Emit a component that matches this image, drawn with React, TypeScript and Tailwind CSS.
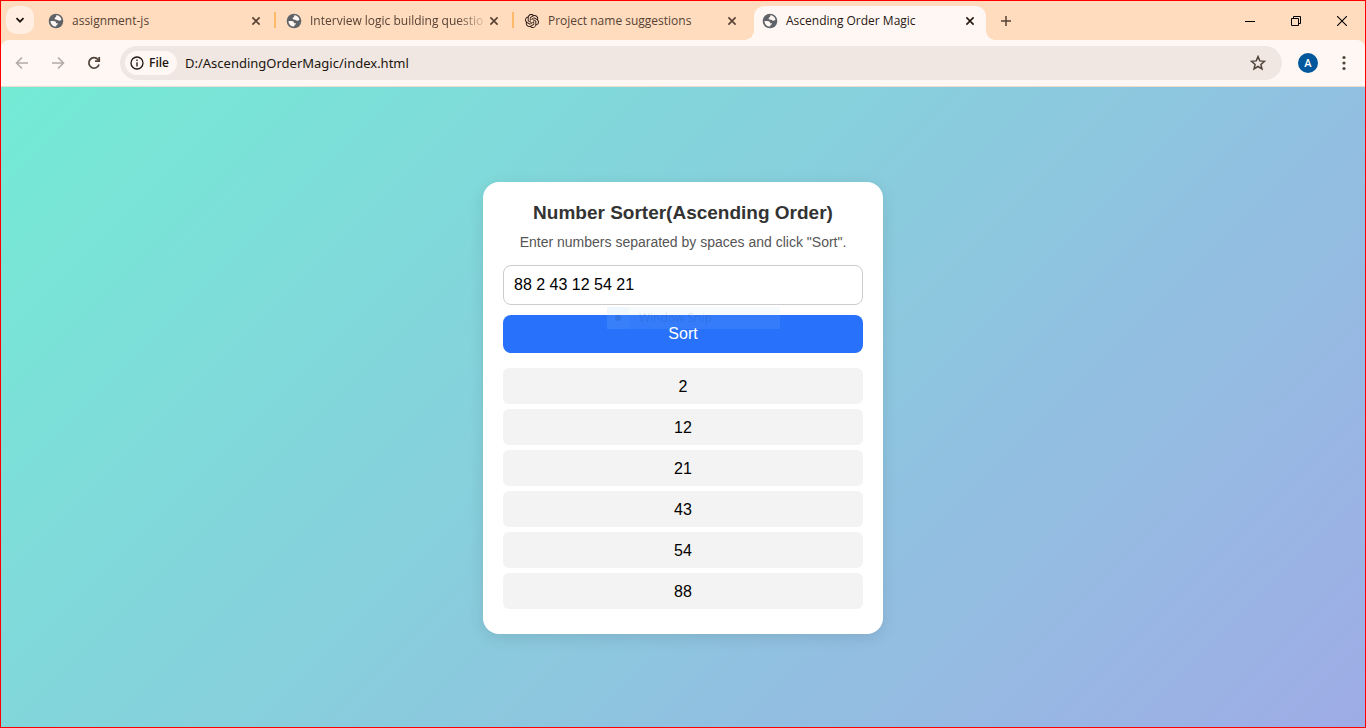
import { useState } from "react";
import type { ReactNode } from "react";
import { SiOpenai } from "react-icons/si";

function GlobeIcon() {
  return (
    <svg viewBox="0 0 16 16" className="size-4 shrink-0" aria-hidden="true">
      <circle cx="8" cy="8" r="7.3" fill="#5f6368" />
      <path
        d="M8.2 2.3C10.8 2.4 12.9 4 13.5 6.5C12.6 7.6 11.4 8 10.4 7.6C9.8 7.2 9.4 6.7 8.5 6.7C7.3 6.7 6.5 6.3 6.7 5.3C6.9 4.3 8.1 4.5 8.2 3.6Z"
        fill="#fff7f3"
      />
      <path
        d="M2.5 7.9H5.4C7.2 7.9 8.1 8.8 8.1 10.2H9.6C10.2 10.2 10.2 11 9.5 11.4C8.5 11.8 8.4 12.4 8.1 13.5C5 13.5 2.5 11.2 2.5 7.9Z"
        fill="#fff7f3"
      />
    </svg>
  );
}

function CloseIcon() {
  return (
    <svg viewBox="0 0 10 10" className="size-[10px]" fill="none" stroke="currentColor" strokeWidth="1.6" aria-hidden="true">
      <path d="M1.4 1.4L8.6 8.6M8.6 1.4L1.4 8.6" />
    </svg>
  );
}

type TabProps = { title: string; icon: ReactNode; active?: boolean; divider?: boolean; fade?: boolean };

function Tab({ title, icon, active, divider, fade }: TabProps) {
  return (
    <div
      role="tab"
      aria-selected={!!active}
      className={
        "relative flex items-center pl-2 " +
        (active
          ? "h-[34px] w-[232px] self-end rounded-t-[10px] bg-[#fff7f3] pr-2 pb-[5px] text-[#281812]"
          : "h-full w-[238px] pr-[14px] text-[#574234]")
      }
    >
      {active && (
        <>
          <span className="absolute bottom-0 -left-[10px] size-[10px] bg-[radial-gradient(circle_at_0_0,transparent_10px,#fff7f3_10px)]" />
          <span className="absolute bottom-0 -right-[10px] size-[10px] bg-[radial-gradient(circle_at_100%_0,transparent_10px,#fff7f3_10px)]" />
        </>
      )}
      <span className="mr-2 flex size-4 shrink-0 items-center justify-center">{icon}</span>
      <span
        className={
          "whitespace-nowrap text-[12px] leading-4 " +
          (fade ? "[mask-image:linear-gradient(to_right,black_85%,rgba(0,0,0,0.2))]" : "")
        }
      >
        {title}
      </span>
      <button type="button" aria-label={"Close " + title} className="ml-auto flex w-4 shrink-0 items-center justify-end pr-[3px] h-4">
        <CloseIcon />
      </button>
      {divider && <span className="absolute right-[2px] top-[11px] h-4 w-[2px] bg-[#ffb968]" />}
    </div>
  );
}

function TabStrip() {
  return (
    <header className="flex h-[39px] bg-[#ffdcbe]">
      <button
        type="button"
        aria-label="Search tabs"
        className="ml-[5px] mt-[5px] mr-[6px] flex size-7 shrink-0 items-center justify-center rounded-[10px] bg-[#ffeee1] text-[#20140e]"
      >
        <svg viewBox="0 0 10 10" className="size-[10px]" fill="none" stroke="currentColor" strokeWidth="1.8" aria-hidden="true">
          <path d="M1.5 3.2L5 6.7L8.5 3.2" />
        </svg>
      </button>
      <div role="tablist" className="flex">
        <Tab title="assignment-js" icon={<GlobeIcon />} divider />
        <Tab title="Interview logic building questio" icon={<GlobeIcon />} divider fade />
        <Tab title="Project name suggestions" icon={<SiOpenai className="size-[14px] text-[#20140e]" />} />
        <Tab title="Ascending Order Magic" icon={<GlobeIcon />} active />
      </div>
      <button type="button" aria-label="New tab" className="ml-[6px] flex w-7 items-center justify-center text-[#574234]">
        <svg viewBox="0 0 12 12" className="size-3" stroke="currentColor" strokeWidth="1.5" aria-hidden="true">
          <path d="M6 1V11M1 6H11" />
        </svg>
      </button>
      <div className="ml-auto flex text-black">
        <button type="button" aria-label="Minimize" className="flex w-[46px] items-center justify-center">
          <svg viewBox="0 0 10 10" className="size-[10px]" stroke="currentColor" aria-hidden="true">
            <path d="M0 5.5H10" />
          </svg>
        </button>
        <button type="button" aria-label="Restore" className="flex w-[46px] items-center justify-center">
          <svg viewBox="0 0 10 10" className="size-[10px]" fill="none" stroke="currentColor" aria-hidden="true">
            <path d="M0.5 2.5H7.5V9.5H0.5ZM2.5 2.5V0.5H9.5V7.5H7.5" />
          </svg>
        </button>
        <button type="button" aria-label="Close window" className="flex w-[46px] items-center justify-center">
          <svg viewBox="0 0 10 10" className="size-[10px]" stroke="currentColor" strokeWidth="1.1" aria-hidden="true">
            <path d="M0 0L10 10M10 0L0 10" />
          </svg>
        </button>
      </div>
    </header>
  );
}

function Toolbar() {
  return (
    <div className="bg-[#ffdcbe]">
      <div className="flex h-[47px] items-center rounded-t-lg border-b border-[#ecdccf] bg-[#fff7f3] px-[13px]">
        <button type="button" aria-label="Back" className="flex size-4 items-center justify-center text-[#b5aaa5]">
          <svg viewBox="0 0 16 16" className="size-4" fill="none" stroke="currentColor" strokeWidth="1.6" aria-hidden="true">
            <path d="M14 8H3M8 2.5L2.5 8L8 13.5" />
          </svg>
        </button>
        <button type="button" aria-label="Forward" className="ml-5 flex size-4 items-center justify-center text-[#b5aaa5]">
          <svg viewBox="0 0 16 16" className="size-4" fill="none" stroke="currentColor" strokeWidth="1.6" aria-hidden="true">
            <path d="M2 8H13M8 2.5L13.5 8L8 13.5" />
          </svg>
        </button>
        <button type="button" aria-label="Reload" className="ml-5 flex size-4 items-center justify-center text-[#51443b]">
          <svg viewBox="0 0 16 16" className="size-4" fill="none" stroke="currentColor" strokeWidth="1.8" aria-hidden="true">
            <path d="M13 9.5A5.2 5.2 0 1 1 12 4.5L13 5.6" />
            <path d="M13.2 2V6.2H9" />
          </svg>
        </button>
        <div className="ml-[18px] flex h-[34px] flex-1 items-center rounded-full bg-[#f0e7e2] pl-[5px] pr-4">
          <button type="button" className="flex h-6 items-center gap-[5px] rounded-full bg-[#fff7f3] pl-[5px] pr-2 text-[12px] font-semibold text-[#20140e]">
            <svg viewBox="0 0 14 14" className="size-[14px]" fill="none" stroke="currentColor" strokeWidth="1.3" aria-hidden="true">
              <circle cx="7" cy="7" r="6" />
              <path d="M7 6.2V10.4M7 3.6V5" />
            </svg>
            File
          </button>
          <input
            aria-label="Address"
            defaultValue="D:/AscendingOrderMagic/index.html"
            className="ml-2 min-w-0 flex-1 bg-transparent font-['Noto_Sans','Open_Sans',sans-serif] text-[13px] leading-5 text-[#20140e] outline-none"
          />
          <button type="button" aria-label="Bookmark this page" className="flex size-4 items-center justify-center text-[#51443b]">
            <svg viewBox="0 0 16 16" className="size-4" fill="none" stroke="currentColor" strokeWidth="1.5" aria-hidden="true">
              <path d="M8 1.6L9.8 5.9L14.5 6.3L10.9 9.4L12 14L8 11.5L4 14L5.1 9.4L1.5 6.3L6.2 5.9Z" />
            </svg>
          </button>
        </div>
        <button
          type="button"
          aria-label="Profile"
          className="ml-4 flex size-5 items-center justify-center rounded-full bg-[#01579b] font-[Roboto,sans-serif] text-[11px] font-medium leading-none text-white"
        >
          A
        </button>
        <button type="button" aria-label="Menu" className="ml-[18px] flex size-4 items-center justify-center text-[#51443b]">
          <svg viewBox="0 0 16 16" className="size-4" fill="currentColor" aria-hidden="true">
            <circle cx="8" cy="2.5" r="1.6" />
            <circle cx="8" cy="8" r="1.6" />
            <circle cx="8" cy="13.5" r="1.6" />
          </svg>
        </button>
      </div>
    </div>
  );
}

function parseAndSort(text: string): number[] {
  return text
    .split(/\s+/)
    .filter(Boolean)
    .map(Number)
    .filter((n) => !Number.isNaN(n))
    .sort((a, b) => a - b);
}

function NumberSorter() {
  const [text, setText] = useState("88 2 43 12 54 21");
  const [sorted, setSorted] = useState<number[]>(() => parseAndSort("88 2 43 12 54 21"));

  return (
    <section className="w-full max-w-[400px] rounded-2xl bg-white p-5 text-center shadow-[0_4px_15px_rgba(0,0,0,0.1)]">
      <h1 className="text-[19px] font-bold leading-[22px] text-[#333]">Number Sorter(Ascending Order)</h1>
      <p id="hint" className="mt-[10px] text-[14px] leading-4 text-[#555]">
        Enter numbers separated by spaces and click "Sort".
      </p>
      <input
        aria-label="Numbers"
        aria-describedby="hint"
        value={text}
        onChange={(e) => setText(e.target.value)}
        className="mt-[15px] block h-10 w-full rounded-lg border border-[#ccc] bg-white px-[10px] text-[16px] text-black outline-none"
      />
      <div className="relative mt-[10px]">
        <button
          type="button"
          onClick={() => setSorted(parseAndSort(text))}
          className="block h-[38px] w-full rounded-lg bg-[#2872fb] text-[16px] text-white"
        >
          Sort
        </button>
        <div className="pointer-events-none absolute -top-2 left-[104px] flex h-[22px] w-[173px] items-center bg-[#aad7fa]/10 font-['Open_Sans',sans-serif] text-[12px] text-[#12306e]/15">
          <span className="flex h-full w-[22px] items-center justify-center bg-[#91c8fa]/5">
            <span className="size-[6px] rounded-full bg-[#12306e]/15" />
          </span>
          <span className="ml-[10px]">Window Snip</span>
        </div>
      </div>
      <ul className="mt-[15px] mb-[5px] flex flex-col gap-[5px]">
        {sorted.map((n, i) => (
          <li key={i} className="rounded-md bg-[#f3f3f3] pt-[9px] pb-[7px] text-[16px] leading-5 text-black">
            {n}
          </li>
        ))}
      </ul>
    </section>
  );
}

export default function App() {
  return (
    <div className="flex min-h-screen flex-col border border-[#ff0000] font-['Open_Sans','Noto_Sans',sans-serif]">
      <TabStrip />
      <Toolbar />
      <main className="flex flex-1 items-center justify-center bg-[linear-gradient(135deg,#74ebd5,#9face6)] pt-0.5 font-['Liberation_Sans',Arial,sans-serif]">
        <NumberSorter />
      </main>
    </div>
  );
}
